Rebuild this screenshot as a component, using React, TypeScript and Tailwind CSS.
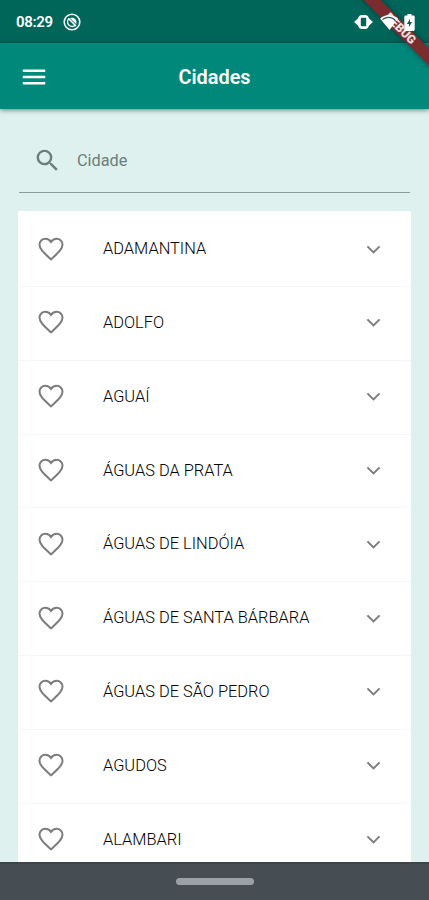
import { MdMenu, MdSearch } from "react-icons/md";

const cities: string[] = [
  "ADAMANTINA",
  "ADOLFO",
  "AGUAÍ",
  "ÁGUAS DA PRATA",
  "ÁGUAS DE LINDÓIA",
  "ÁGUAS DE SANTA BÁRBARA",
  "ÁGUAS DE SÃO PEDRO",
  "AGUDOS",
  "ALAMBARI",
];

function StatusBar() {
  return (
    <div className="flex h-[43px] shrink-0 items-center bg-[#00665a] pl-4 pr-[14px] pt-px text-white">
      <span className="w-[37px] whitespace-nowrap text-[15px] font-semibold tracking-[-0.3px]">08:29</span>
      <svg viewBox="0 0 18 18" className="ml-[10px] h-[18px] w-[18px]" fill="none" stroke="currentColor">
        <circle cx="9" cy="9" r="7.8" strokeWidth="1.6" />
        <path d="M6 5.400A4.700 4.700 0 1012.500 12.200" strokeWidth="1.3" />
        <path d="M5.500 5.500l7.500 7.500" strokeWidth="1.6" />
        <path d="M7 5.200c3.500-1.700 7.500 1.300 6.300 5.800L7 5.200z" fill="currentColor" stroke="none" />
      </svg>
      {/* system icons sit above the debug banner */}
      <div className="relative z-30 ml-auto flex items-center">
        <svg viewBox="0 0 19 14" className="h-[14px] w-[19px]" fill="currentColor">
          <path d="M5 2.500L0 7l5 4.500zM14 2.500L19 7l-5 4.500z" />
          <rect x="5.200" y="1" width="8.600" height="12" rx="3" fill="none" stroke="currentColor" strokeWidth="2" />
          <rect x="6" y="2" width="7" height="10" rx="1.500" fill="none" stroke="currentColor" strokeWidth="1.500" />
        </svg>
        <svg viewBox="0 0 18 17" className="ml-[7px] h-[17px] w-[18px]" fill="currentColor">
          <path d="M0 4.500C5-.2 13-.2 18 4.500L9.500 16 0 4.500z" />
          <path d="M2.500 5.500c4-2.600 8.500-2.600 12 0l1 2" fill="none" stroke="#31554c" strokeWidth="1.3" />
        </svg>
        <svg viewBox="0 0 11 18" className="ml-[6px] h-[17px] w-[11px]" fill="currentColor">
          <path
            fillRule="evenodd"
            d="M3.300 0h4.400v1.500H9.500A1.500 1.500 0 0111 3v13.500a1.500 1.500 0 01-1.500 1.500h-8A1.500 1.500 0 010 16.500V3a1.500 1.500 0 011.500-1.500h1.800V0zM6 5L2.800 10.500H5V14l3.200-5.500H6V5z"
          />
        </svg>
      </div>
    </div>
  );
}

function DebugBanner() {
  return (
    <div className="pointer-events-none absolute right-0 top-0 z-20 h-20 w-20 overflow-hidden">
      <div className="absolute left-[-15px] top-[21px] flex h-[12px] w-[130px] rotate-45 items-center justify-center bg-[#7b2c2f] pl-1 text-[12px] font-black leading-none text-white/85 shadow-[0_0_7px_rgba(0,0,0,0.4)]">
        DEBUG
      </div>
    </div>
  );
}

function HeartIcon() {
  return (
    <svg viewBox="0 0 24 24" className="mb-[2px] h-[30px] w-[30px] text-[#7c7c7c]" fill="none" stroke="currentColor" strokeWidth="1.6">
      <path d="M12 20.300C6.500 15.300 2.800 12.200 2.800 8.500c0-2.700 2.100-4.700 4.700-4.700 1.800 0 3.500.9 4.500 2.500 1-1.600 2.700-2.500 4.500-2.500 2.600 0 4.700 2 4.700 4.700 0 3.700-3.700 6.800-9.200 11.800z" />
    </svg>
  );
}

function ChevronIcon() {
  return (
    <svg viewBox="0 0 24 24" className="mb-px ml-auto h-[27px] w-[27px] text-[#7c7c7c]" fill="none" stroke="currentColor" strokeWidth="1.7">
      <path d="M6.600 9.200L12 14.600l5.400-5.400" />
    </svg>
  );
}

function CityRow({ name }: { name: string }) {
  return (
    <li className="flex h-[73.8px] shrink-0 items-center border-b border-[#f6f6f6] pl-[18px] pr-6">
      <HeartIcon />
      <span className="ml-[37px] whitespace-nowrap text-[16.4px] font-light text-black">{name}</span>
      <ChevronIcon />
    </li>
  );
}

export default function App() {
  return (
    <div className="relative flex h-[900px] w-[429px] flex-col overflow-hidden bg-[#def1ee] font-['Roboto',sans-serif]">
      <StatusBar />

      <header className="z-10 grid h-[66px] shrink-0 grid-cols-[1fr_auto_1fr] items-center bg-[#00897b] pt-[2px] text-white shadow-[0_1px_5px_rgba(0,0,0,0.5)]">
        <MdMenu className="ml-[19px] h-[30px] w-[30px]" />
        <h1 className="pt-px text-[19.9px] font-semibold">Cidades</h1>
      </header>

      <main className="flex min-h-0 flex-1 flex-col overflow-hidden px-[18px] pt-[19px]">
        <label className="mx-[1px] flex h-[65px] shrink-0 items-center border-b border-[#8b9c99] pl-[14px] pt-px text-[#6c7d7a]">
          <MdSearch className="h-[29px] w-[29px]" />
          <span className="ml-[15px] pt-px text-[16.3px]">Cidade</span>
        </label>

        <ul className="mt-[18px] flex flex-col rounded-t-[2px] bg-white pt-[2.2px]">
          {cities.map((city) => (
            <CityRow key={city} name={city} />
          ))}
        </ul>
      </main>

      <footer className="flex h-[38px] shrink-0 items-center justify-center border-t-2 border-[#3c4648] bg-[#464e53] pb-[2px]">
        <div className="h-[7px] w-[78px] rounded-full bg-[#9ba1a4]" />
      </footer>

      <DebugBanner />
    </div>
  );
}
